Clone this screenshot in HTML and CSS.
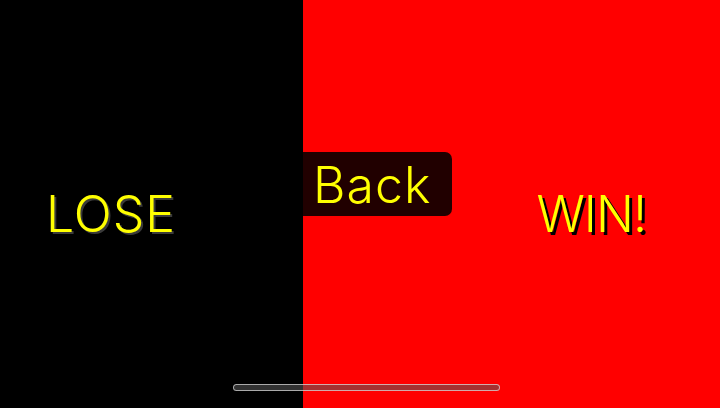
FILE: index.html
```html
<!DOCTYPE html>
<html>
<head>
<meta charset="utf-8">
<link rel="stylesheet" href="styles.css">
</head>
<body>
<div class="screen">
  <div class="pane lose-pane">
    <span class="label lose">LOSE</span>
  </div>
  <div class="pane win-pane">
    <span class="label win">WIN!</span>
  </div>
  <button class="back">Back</button>
  <div class="home-indicator"></div>
</div>
</body>
</html>
```
FILE: styles.css
```css
html, body {
  margin: 0;
  padding: 0;
  background: #000;
}
.screen {
  position: relative;
  width: 720px;
  height: 408px;
  display: flex;
  overflow: hidden;
  font-family: "Inter", "Liberation Sans", sans-serif;
}
.pane {
  height: 100%;
  display: flex;
  align-items: center;
}
.lose-pane {
  width: 303px;
  background: #000;
  padding-left: 46px;
  box-sizing: border-box;
}
.win-pane {
  flex: 1;
  background: #ff0000;
  justify-content: flex-end;
  padding-right: 74px;
  box-sizing: border-box;
}
.label {
  font-size: 50px;
  font-weight: 300;
  line-height: 1;
  color: #ffff00;
  padding-top: 20px;
}
.lose {
  letter-spacing: 1px;
  text-shadow: 2px 2px 0 #3a3a3a;
}
.win {
  letter-spacing: -1px;
  text-shadow: 3px 3px 0 #000;
}
.back {
  position: absolute;
  left: 293px;
  top: 152px;
  width: 159px;
  height: 64px;
  border: none;
  border-radius: 7px;
  background: rgba(0, 0, 0, 0.87);
  color: #ffff00;
  font-family: "Inter", "Liberation Sans", sans-serif;
  font-size: 50px;
  font-weight: 300;
  line-height: 1;
  letter-spacing: 1px;
  padding: 2px 0 0 20px;
  text-align: left;
}
.home-indicator {
  position: absolute;
  left: 233px;
  top: 384px;
  width: 267px;
  height: 7px;
  box-sizing: border-box;
  border-radius: 4px;
  background: rgba(90, 90, 90, 0.55);
  border: 1px solid rgba(235, 235, 235, 0.65);
}
```
